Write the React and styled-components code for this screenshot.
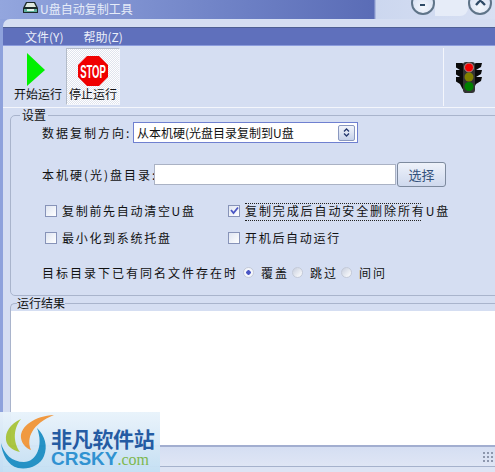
import React from "react";
import styled, { createGlobalStyle } from "styled-components";

const FONT = `"Noto Sans CJK SC", "Liberation Sans", sans-serif`;

export default function App() {
	return (
		<Page>
			<Global />
			<TitleBar>
				<DriveIcon />
				<TitleText>U盘自动复制工具</TitleText>
				<WindowButtons>
					<RoundButton>
						<MinusMark />
					</RoundButton>
					<ButtonGap />
					<RoundButton>
						<CloseMark />
					</RoundButton>
				</WindowButtons>
			</TitleBar>
			<Body>
				<TopBand />
				<MenuBar>
					<MenuItem>文件(Y)</MenuItem>
					<MenuItem>帮助(Z)</MenuItem>
				</MenuBar>
				<Toolbar>
					<ToolButton>
						<PlayIcon />
						<ToolLabel>开始运行</ToolLabel>
					</ToolButton>
					<ToolButton $active>
						<StopIcon />
						<ToolLabel>停止运行</ToolLabel>
					</ToolButton>
					<LightPanel>
						<TrafficLight />
					</LightPanel>
				</Toolbar>
				<Settings>
					<SettingsLegend>设置</SettingsLegend>
					<SettingsBody>
						<FieldRow $top={-2}>
							<FieldLabel $width={91}>数据复制方向:</FieldLabel>
							<Select>
								<SelectText>从本机硬(光盘目录复制到U盘</SelectText>
								<SelectArrow>
									<ArrowIcon />
								</SelectArrow>
							</Select>
						</FieldRow>
						<FieldRow $top={17}>
							<FieldLabel $width={112}>本机硬(光)盘目录:</FieldLabel>
							<TextBox />
							<PickButton>选择</PickButton>
						</FieldRow>
						<OptionGrid>
							<Option>
								<CheckBox />
								<OptionText>复制前先自动清空U盘</OptionText>
							</Option>
							<Option>
								<CheckBox $checked>
									<CheckIcon />
								</CheckBox>
								<FocusText>复制完成后自动安全删除所有U盘</FocusText>
							</Option>
							<Option>
								<CheckBox />
								<OptionText>最小化到系统托盘</OptionText>
							</Option>
							<Option>
								<CheckBox />
								<OptionText>开机后自动运行</OptionText>
							</Option>
						</OptionGrid>
						<RadioRow>
							<RadioLead>目标目录下已有同名文件存在时</RadioLead>
							<Radio $checked />
							<RadioText>覆盖</RadioText>
							<Radio />
							<RadioText>跳过</RadioText>
							<Radio />
							<RadioText>间问</RadioText>
						</RadioRow>
					</SettingsBody>
				</Settings>
				<Results>
					<ResultsLegend>运行结果</ResultsLegend>
					<ResultArea />
				</Results>
				<StatusBar>
					<Grip />
				</StatusBar>
			</Body>
			<Watermark>
				<LogoMark />
				<WatermarkText>
					<SiteName>非凡软件站</SiteName>
					<SiteUrl>
						CRSKY<SiteDomain>.com</SiteDomain>
					</SiteUrl>
				</WatermarkText>
			</Watermark>
		</Page>
	);
}

function DriveIcon() {
	return (
		<svg width="17" height="14" viewBox="0 0 17 14">
			<path d="M4 1h9l3 6v5H1V7z" fill="#1b2a2a" />
			<path d="M5 2h7l2 4H3z" fill="#dfe8e0" />
			<rect x="2" y="8" width="13" height="3" fill="#5fb09a" />
			<rect x="5" y="8" width="7" height="2" fill="#e9f2ee" />
		</svg>
	);
}

function MinusMark() {
	return (
		<svg width="8" height="4" viewBox="0 0 8 4">
			<rect x="1" y="0" width="5" height="2" fill="#2f4a66" />
		</svg>
	);
}

function CloseMark() {
	return (
		<svg width="12" height="12" viewBox="0 0 12 12">
			<path d="M2 0l9 9M10 0L2 9" stroke="#2f4a66" strokeWidth="2.4" />
		</svg>
	);
}

function PlayIcon() {
	return (
		<svg width="20" height="34" viewBox="0 0 20 34">
			<polygon points="1,0 19,17 1,33" fill="#00f000" />
		</svg>
	);
}

function StopIcon() {
	return (
		<svg width="32" height="32" viewBox="0 0 32 32">
			<polygon points="10,1 22,1 31,10 31,22 22,31 10,31 1,22 1,10" fill="#f00000" />
			<text
				transform="translate(16 23) scale(0.5 1)"
				textAnchor="middle"
				fontFamily="Liberation Sans, sans-serif"
				fontWeight="700"
				fontSize="19"
				fill="#fff"
			>
				STOP
			</text>
		</svg>
	);
}

function TrafficLight() {
	return (
		<svg width="26" height="33" viewBox="0 0 26 33">
			<path d="M0 2h6l2 1h10l2-1h6l-1 4-5 3h6l-1 4-5 3h6l-1 4-5 3-2 4-3 5h-6l-3-5-2-4-5-3-1-4h6l-5-3-1-4h6l-5-3z" fill="#0a0a0a" />
			<rect x="7" y="1" width="12" height="31" rx="3" fill="#333" />
			<circle cx="13" cy="6.500" r="4.500" fill="#f00000" stroke="#aaa" strokeWidth="0.8" />
			<circle cx="13" cy="16" r="4.500" fill="#808000" />
			<circle cx="13" cy="25.500" r="4.500" fill="#008000" />
		</svg>
	);
}

function ArrowIcon() {
	return (
		<svg width="7" height="9" viewBox="0 0 7 9">
			<path d="M1 3.500l2.500-2.500 2.500 2.500M1 5.500l2.500 2.500 2.500-2.500" fill="none" stroke="#24386e" strokeWidth="1.300" />
		</svg>
	);
}

function CheckIcon() {
	return (
		<svg width="9" height="9" viewBox="0 0 9 9">
			<path d="M1 4l2.500 3L8 1.500" fill="none" stroke="#4a56c4" strokeWidth="1.800" />
		</svg>
	);
}

function LogoMark() {
	return (
		<svg width="55" height="60" viewBox="0 0 55 60">
			<path d="M54 3C35 4 20 14 21 26c1 6 5 10 10 12C26 26 32 12 54 3z" fill="#f0953a" />
			<path d="M21 7C10 12 5 20 6 28c1 6 6 10 14 12C14 32 12 18 21 7z" fill="#a8c43c" />
			<path d="M37 16c8 8 11 18 7 28-4 10-16 14-26 12C8 54 2 42 1 31c3 11 11 19 23 19 12 0 20-16 13-34z" fill="#1f8fc4" />
		</svg>
	);
}

const Global = createGlobalStyle`
	html, body {
		margin: 0;
		padding: 0;
		width: 495px;
		height: 472px;
		overflow: hidden;
	}
	* {
		box-sizing: border-box;
	}
`;

const Page = styled.div`
	position: relative;
	width: 495px;
	height: 472px;
	overflow: hidden;
	display: flex;
	flex-direction: column;
	background: #8ea2dc;
	font-family: ${FONT};
	font-size: 12px;
	color: #111;
`;
const TitleBar = styled.div`
	display: flex;
	flex: none;
	align-items: center;
	height: 19px;
	padding: 0 0 3px 22px;
	background: linear-gradient(90deg, #93a6de 0%, #6c7fc4 50%, #5a6cb6 75.500%, #ccd7ef 76%, #d8e0f3 100%);
`;
const TitleText = styled.span`
	margin-left: 1px;
	font-size: 12px;
	color: #e6ecf8;
`;
const WindowButtons = styled.div`
	display: flex;
	align-self: flex-start;
	margin-left: auto;
	margin-top: -9px;
	margin-right: 3px;
`;
const RoundButton = styled.div`
	display: flex;
	align-items: flex-end;
	justify-content: center;
	width: 24px;
	height: 24px;
	padding-bottom: 5px;
	border-radius: 50%;
	border: 2px solid #5f7488;
	background: radial-gradient(circle at 50% 70%, #f4f7fc, #cfdaf0);
`;
const ButtonGap = styled.div`
	width: 33px;
	height: 16px;
	margin-top: 9px;
	border-radius: 0 0 8px 0;
	background: #e6ecf8;
`;
const Body = styled.div`
	flex: 1;
	display: flex;
	flex-direction: column;
	margin-left: 3px;
	border-top-left-radius: 7px;
	background: #d5def2;
	overflow: hidden;
`;
const TopBand = styled.div`
	height: 8px;
	flex: none;
`;
const MenuBar = styled.div`
	display: flex;
	flex: none;
	align-items: center;
	gap: 20px;
	height: 19px;
	padding-left: 22px;
	background: #5f70bc;
	border-top: 1px solid #4e5f94;
	border-bottom: 1px solid #8c9cdc;
`;
const MenuItem = styled.span`
	font-size: 12px;
	color: #e9eef9;
`;
const Toolbar = styled.div`
	display: flex;
	flex: none;
	height: 60px;
	margin-top: 2px;
	padding-left: 8px;
	border-bottom: 1px solid #f4f6fc;
	background: #d5def2;
`;
const ToolButton = styled.div`
	display: flex;
	flex-direction: column;
	align-items: center;
	justify-content: flex-end;
	width: 54px;
	height: 57px;
	margin-right: 1px;
	padding-bottom: 3px;
	border: 1px solid ${(p) => (p.$active ? "#b4bcc8" : "transparent")};
	border-right-color: ${(p) => (p.$active ? "#f4f6fc" : "transparent")};
	border-bottom-color: ${(p) => (p.$active ? "#f4f6fc" : "transparent")};
	background: ${(p) =>
		p.$active
			? "repeating-conic-gradient(#e0e4ee 0 25%, #ffffff 0 50%) 0 0 / 2px 2px"
			: "transparent"};
	svg {
		margin-right: ${(p) => (p.$active ? "0" : "4px")};
	}
`;
const ToolLabel = styled.span`
	font-size: 12px;
	line-height: 14px;
	white-space: nowrap;
`;
const LightPanel = styled.div`
	display: flex;
	align-items: center;
	justify-content: center;
	width: 52px;
	height: 58px;
	margin-left: auto;
	padding-right: 1px;
	border-left: 1px solid #f4f6fc;
`;
const Settings = styled.fieldset`
	flex: none;
	height: 188px;
	margin: 0 -6px 0 7px;
	padding: 0;
	border: 1px solid #a9b4cc;
	border-radius: 5px;
`;
const SettingsLegend = styled.legend`
	margin-left: 9px;
	padding: 0 2px;
	font-size: 12px;
	line-height: 14px;
`;
const SettingsBody = styled.div`
	padding: 0 0 0 31px;
`;
const FieldRow = styled.div`
	display: flex;
	align-items: center;
	height: 25px;
	margin-top: ${(p) => p.$top}px;
`;
const FieldLabel = styled.span`
	flex: none;
	width: ${(p) => p.$width}px;
	letter-spacing: 2px;
	white-space: nowrap;
`;
const Select = styled.div`
	display: flex;
	align-items: center;
	justify-content: space-between;
	width: 225px;
	height: 21px;
	padding: 0 2px 0 3px;
	border: 1px solid #6f80d0;
	background: #fff;
`;
const SelectText = styled.span`
	white-space: nowrap;
`;
const SelectArrow = styled.div`
	display: flex;
	align-items: center;
	justify-content: center;
	width: 17px;
	height: 16px;
	border: 1px solid #8a98c0;
	border-radius: 2px;
	background: linear-gradient(#f2f5fb, #c6d2ea);
`;
const TextBox = styled.div`
	width: 242px;
	height: 21px;
	border: 1px solid #aab2c4;
	background: #fff;
`;
const PickButton = styled.div`
	display: flex;
	align-items: center;
	justify-content: center;
	width: 49px;
	height: 25px;
	margin-left: 1px;
	border: 1px solid #7d8a9e;
	border-radius: 3px;
	background: linear-gradient(#eef2fa, #cfd9ee);
	font-size: 13px;
	color: #34527c;
`;
const OptionGrid = styled.div`
	display: grid;
	grid-template-columns: 183px auto;
	grid-auto-rows: 27px;
	margin-top: 10px;
	margin-left: 3px;
`;
const Option = styled.div`
	display: flex;
	align-items: center;
	gap: 5px;
`;
const CheckBox = styled.div`
	display: flex;
	flex: none;
	align-items: center;
	justify-content: center;
	width: 12px;
	height: 12px;
	border: 1px solid #8793b8;
	background: linear-gradient(135deg, #dfe5f2, #fff);
`;
const OptionText = styled.span`
	letter-spacing: 1.700px;
	white-space: nowrap;
`;
const FocusText = styled(OptionText)`
	position: relative;
	letter-spacing: 1.900px;
	&::before {
		content: "";
		position: absolute;
		left: 0;
		top: 1px;
		width: 176px;
		height: 16px;
		border-top: 1px dotted #222;
		border-bottom: 1px dotted #222;
	}
`;
const RadioRow = styled.div`
	display: flex;
	align-items: center;
	height: 20px;
	margin-top: 11px;
`;
const RadioLead = styled(OptionText)`
	letter-spacing: 2px;
	margin-right: 2px;
`;
const Radio = styled.div`
	flex: none;
	width: 11px;
	height: 11px;
	margin-left: 3px;
	border: 1px solid #c4cad8;
	border-radius: 50%;
	background: ${(p) =>
		p.$checked
			? "radial-gradient(circle, #4a56c4 0 2px, #f4f6fc 2.500px)"
			: "linear-gradient(135deg, #c8cfdf, #fff)"};
`;
const RadioText = styled(OptionText)`
	letter-spacing: 2px;
	margin-left: 7px;
`;
const Results = styled.fieldset`
	flex: 1;
	min-height: 0;
	margin: 0 -6px 0 7px;
	padding: 0;
	border: none;
	border-top: 1px solid #a9b4cc;
	border-left: 1px solid #a9b4cc;
	border-top-left-radius: 5px;
	display: flex;
	flex-direction: column;
`;
const ResultsLegend = styled.legend`
	margin-left: 6px;
	padding: 0;
	font-size: 12px;
	line-height: 14px;
`;
const ResultArea = styled.div`
	height: 134px;
	margin-top: 1px;
	background: #fff;
`;
const StatusBar = styled.div`
	flex: none;
	position: relative;
	height: 27px;
	margin-top: -1px;
	border-top: 2px solid #a2aed0;
	background: linear-gradient(#d5def2 0, #dfe6f5 19px, #a6b2cc 19px, #a6b2cc 20px, #dde4f4 20px);
`;
const Grip = styled.div`
	position: absolute;
	right: 1px;
	top: 4px;
	width: 12px;
	height: 13px;
	background: radial-gradient(circle, #8d97ad 1px, transparent 1.200px) 0 0 / 4px 4px;
`;
const Watermark = styled.div`
	position: absolute;
	left: 0;
	bottom: 0;
	display: flex;
	width: 160px;
	height: 60px;
	background: linear-gradient(#e9f3fb, #c5e0f4);
	opacity: 0.96;
`;
const WatermarkText = styled.div`
	display: flex;
	flex-direction: column;
	margin-left: -4px;
	padding-top: 14px;
`;
const SiteName = styled.span`
	font-size: 21px;
	line-height: 24px;
	font-weight: 700;
	letter-spacing: -0.3px;
	color: #1c56a0;
	white-space: nowrap;
`;
const SiteUrl = styled.span`
	font-family: "Liberation Sans", sans-serif;
	font-size: 19px;
	line-height: 18px;
	font-weight: 700;
	color: #2a8fd0;
	white-space: nowrap;
`;
const SiteDomain = styled.span`
	font-family: "Liberation Serif", serif;
	font-weight: 400;
	font-size: 16px;
	color: #7ab648;
`;
